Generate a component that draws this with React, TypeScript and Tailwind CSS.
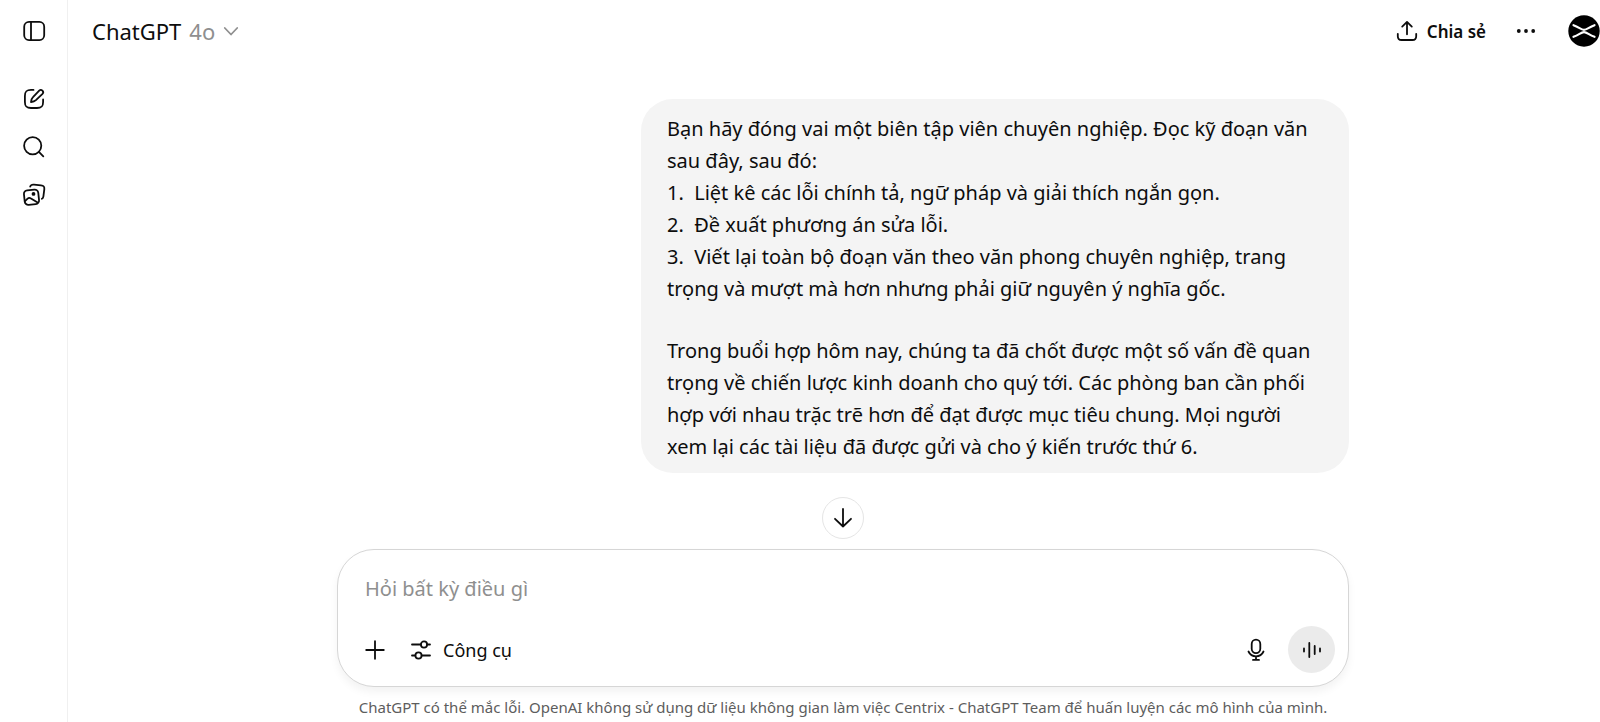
import React from 'react';

interface IconProps {
  children: React.ReactNode;
  className?: string;
}

const Icon: React.FC<IconProps> = ({ children, className = 'size-6' }) => (
  <svg viewBox="0 0 24 24" fill="none" stroke="currentColor" strokeWidth="1.8" strokeLinecap="round" strokeLinejoin="round" className={className} aria-hidden="true">
    {children}
  </svg>
);

const Icons = {
  Sidebar: () => (
    <Icon>
      <rect x="2.2" y="2.9" width="20" height="18.2" rx="4.8" />
      <path d="M9 3v18" />
    </Icon>
  ),
  Edit: () => (
    <Icon>
      <path d="M11.5 2.9H9c-4.6 0-6.1 1.5-6.1 6.1v5.9c0 4.6 1.5 6.1 6.1 6.1h6c4.6 0 6.1-1.5 6.1-6.1V12.5" />
      <path d="M17.2 3.7a2.2 2.2 0 0 1 3.3 3.1l-6.600 6.400c-1.300 1.200-2.800 1.700-4.900 1.900.2-2.100.8-3.700 2-4.900z" />
    </Icon>
  ),
  Search: () => (
    <Icon>
      <circle cx="10.7" cy="10.7" r="8.6" />
      <path d="m16.9 16.9 4.4 4.400" />
    </Icon>
  ),
  Library: () => (
    <Icon>
      <rect x="2.300" y="6.900" width="14.400" height="14.600" rx="3.600" transform="rotate(-6 9.500 14.200)" />
      <path d="M8.200 3.600C8.800 1.700 10.200 1.400 12 1.600l7 .7c2.700.3 3.600 1.500 3.300 4l-.9 7c-.2 1.300-.6 2-1.500 2.500" />
      <path d="M3 18.200 5.600 15.600c1-1 2.200-1 3.400-.2l6.600 4" />
      <circle cx="11.500" cy="10.900" r="1" fill="currentColor" />
    </Icon>
  ),
  Share: () => (
    <Icon>
      <path d="M12 15.300V3M7.200 7.600 12 2.900l4.800 4.700" />
      <path d="M2.800 14.800v2.400c0 2.700 1.100 3.800 3.800 3.800h10.800c2.700 0 3.800-1.100 3.800-3.800v-2.400" />
    </Icon>
  ),
  More: () => (
    <Icon>
      <g fill="currentColor" stroke="none">
        <circle cx="4.800" cy="12" r="1.900" />
        <circle cx="12" cy="12" r="1.900" />
        <circle cx="19.200" cy="12" r="1.900" />
      </g>
    </Icon>
  ),
  Chevron: () => (
    <Icon className="size-6 text-[#8f8f8f]">
      <path d="m5.800 9 6.200 6.500L18.200 9" />
    </Icon>
  ),
  ArrowDown: () => (
    <Icon>
      <path d="M12 3v17.500M4 12.800l8 7.700 8-7.700" />
    </Icon>
  ),
  Plus: () => (
    <Icon>
      <path d="M12 3.200v17.600M3.200 12h17.600" />
    </Icon>
  ),
  Tools: () => (
    <Icon>
      <path d="M3 6.500h8.800M18.200 6.500H21M3 17.500h3.300M12.700 17.500H21" />
      <circle cx="15" cy="6.500" r="3.100" />
      <circle cx="9.500" cy="17.500" r="3.100" />
    </Icon>
  ),
  Mic: () => (
    <Icon>
      <rect x="7.700" y="1.700" width="8.600" height="13.400" rx="4.300" />
      <path d="M4.500 13.500c1.500 3.200 4.300 4.900 7.500 4.900s6-1.700 7.500-4.900M12 18.500v3.300M9 21.900h6" />
    </Icon>
  ),
  Wave: () => (
    <Icon>
      <path d="M4 10.500v3M9.300 5v14M14.700 8v8M20 10.500v3" />
    </Icon>
  ),
};

const SIDEBAR_ITEMS = [
  { id: 'new', label: 'Đoạn chat mới', icon: Icons.Edit },
  { id: 'search', label: 'Tìm kiếm', icon: Icons.Search },
  { id: 'library', label: 'Thư viện', icon: Icons.Library },
];

const Sidebar: React.FC = () => (
  <aside className="flex w-[68px] shrink-0 flex-col border-r border-[#f0f0f0]">
    <button aria-label="Mở thanh bên" className="mb-[13px] flex h-[62px] items-center justify-center">
      <Icons.Sidebar />
    </button>
    {SIDEBAR_ITEMS.map(item => (
      <button key={item.id} aria-label={item.label} className="flex h-12 items-center justify-center">
        <item.icon />
      </button>
    ))}
  </aside>
);

const Header: React.FC = () => (
  <header className="flex h-[62px] items-center justify-between pl-6">
    <button className="flex items-center text-[22px] leading-8">
      ChatGPT
      <span className="ml-2 mr-1 text-[#8f8f8f]">4o</span>
      <Icons.Chevron />
    </button>
    <div className="flex items-center">
      <button className="flex items-center gap-2 text-[17px] font-semibold">
        <Icons.Share />
        <span className="pt-0.5">Chia sẻ</span>
      </button>
      <button aria-label="Thêm" className="ml-7">
        <Icons.More />
      </button>
      <button aria-label="Tài khoản" className="ml-[30px]">
        <svg viewBox="0 0 32 32" className="size-8">
          <circle cx="16" cy="16" r="15.700" fill="#000" />
          <path d="M5.500 10.200c6 2.200 7.500 4.600 10.500 4.600s4.500-2.400 10.500-4.600M5.500 21.800c6-2.200 7.500-4.600 10.500-4.600s4.500 2.400 10.500 4.600" fill="none" stroke="#fff" strokeWidth="2.200" strokeLinecap="round" />
        </svg>
      </button>
    </div>
  </header>
);

const UserMessage: React.FC = () => (
  <div className="mt-[37px] flex w-[708px] flex-col gap-[30px] self-end rounded-[32px] bg-[#f4f4f4] px-[26px] pt-[14px] pb-2.5 text-[20px] leading-8">
    <p className="whitespace-pre">
      Bạn hãy đóng vai một biên tập viên chuyên nghiệp. Đọc kỹ đoạn văn{'\n'}
      sau đây, sau đó:{'\n'}
      {'1.  '}Liệt kê các lỗi chính tả, ngữ pháp và giải thích ngắn gọn.{'\n'}
      {'2.  '}Đề xuất phương án sửa lỗi.{'\n'}
      {'3.  '}Viết lại toàn bộ đoạn văn theo văn phong chuyên nghiệp, trang{'\n'}
      trọng và mượt mà hơn nhưng phải giữ nguyên ý nghĩa gốc.
    </p>
    <p className="whitespace-pre">
      Trong buổi hợp hôm nay, chúng ta đã chốt được một số vấn đề quan{'\n'}
      trọng về chiến lược kinh doanh cho quý tới. Các phòng ban cần phối{'\n'}
      hợp với nhau trặc trẽ hơn để đạt được mục tiêu chung. Mọi người{'\n'}
      xem lại các tài liệu đã được gửi và cho ý kiến trước thứ 6.
    </p>
  </div>
);

const Composer: React.FC = () => (
  <form className="flex flex-col rounded-[37px] border border-[#d6d6d6] bg-white pt-[18px] pb-[13px] pl-[27px] pr-[13px] shadow-[0_5px_8px_rgba(0,0,0,0.05)]">
    <input type="text" aria-label="Tin nhắn" placeholder="Hỏi bất kỳ điều gì" className="h-10 w-full text-[20px] outline-none placeholder:text-[#8f8f8f]" />
    <div className="mt-[18px] flex items-center justify-between">
      <div className="flex items-center gap-[22px]">
        <button type="button" aria-label="Thêm tệp" className="-ml-0.5">
          <Icons.Plus />
        </button>
        <button type="button" className="flex items-center gap-2.5 text-[18px]">
          <Icons.Tools />
          <span className="pt-0.5">Công cụ</span>
        </button>
      </div>
      <div className="flex items-center gap-5">
        <button type="button" aria-label="Đọc chính tả">
          <Icons.Mic />
        </button>
        <button type="button" aria-label="Chế độ thoại" className="flex size-[47px] items-center justify-center rounded-full bg-[#ebebeb]">
          <Icons.Wave />
        </button>
      </div>
    </div>
  </form>
);

export default function App() {
  return (
    <div className="flex min-h-screen bg-white font-['Noto_Sans','Open_Sans',sans-serif] text-[#0d0d0d]">
      <Sidebar />
      <div className="flex min-w-0 flex-1 flex-col">
        <Header />
        <main className="flex flex-col pl-[18px]">
          <div className="mx-auto flex w-full max-w-[1012px] flex-col">
            <UserMessage />
            <button aria-label="Cuộn xuống cuối" className="mt-6 mb-2.5 flex size-[42px] items-center justify-center self-center rounded-full border border-[#e5e5e5] bg-white">
              <Icons.ArrowDown />
            </button>
            <Composer />
            <p className="mt-2.5 text-center text-[15px] leading-5 whitespace-nowrap text-[#5d5d5d]">
              ChatGPT có thể mắc lỗi. OpenAI không sử dụng dữ liệu không gian làm việc Centrix - ChatGPT Team để huấn luyện các mô hình của mình.
            </p>
          </div>
        </main>
      </div>
    </div>
  );
}
